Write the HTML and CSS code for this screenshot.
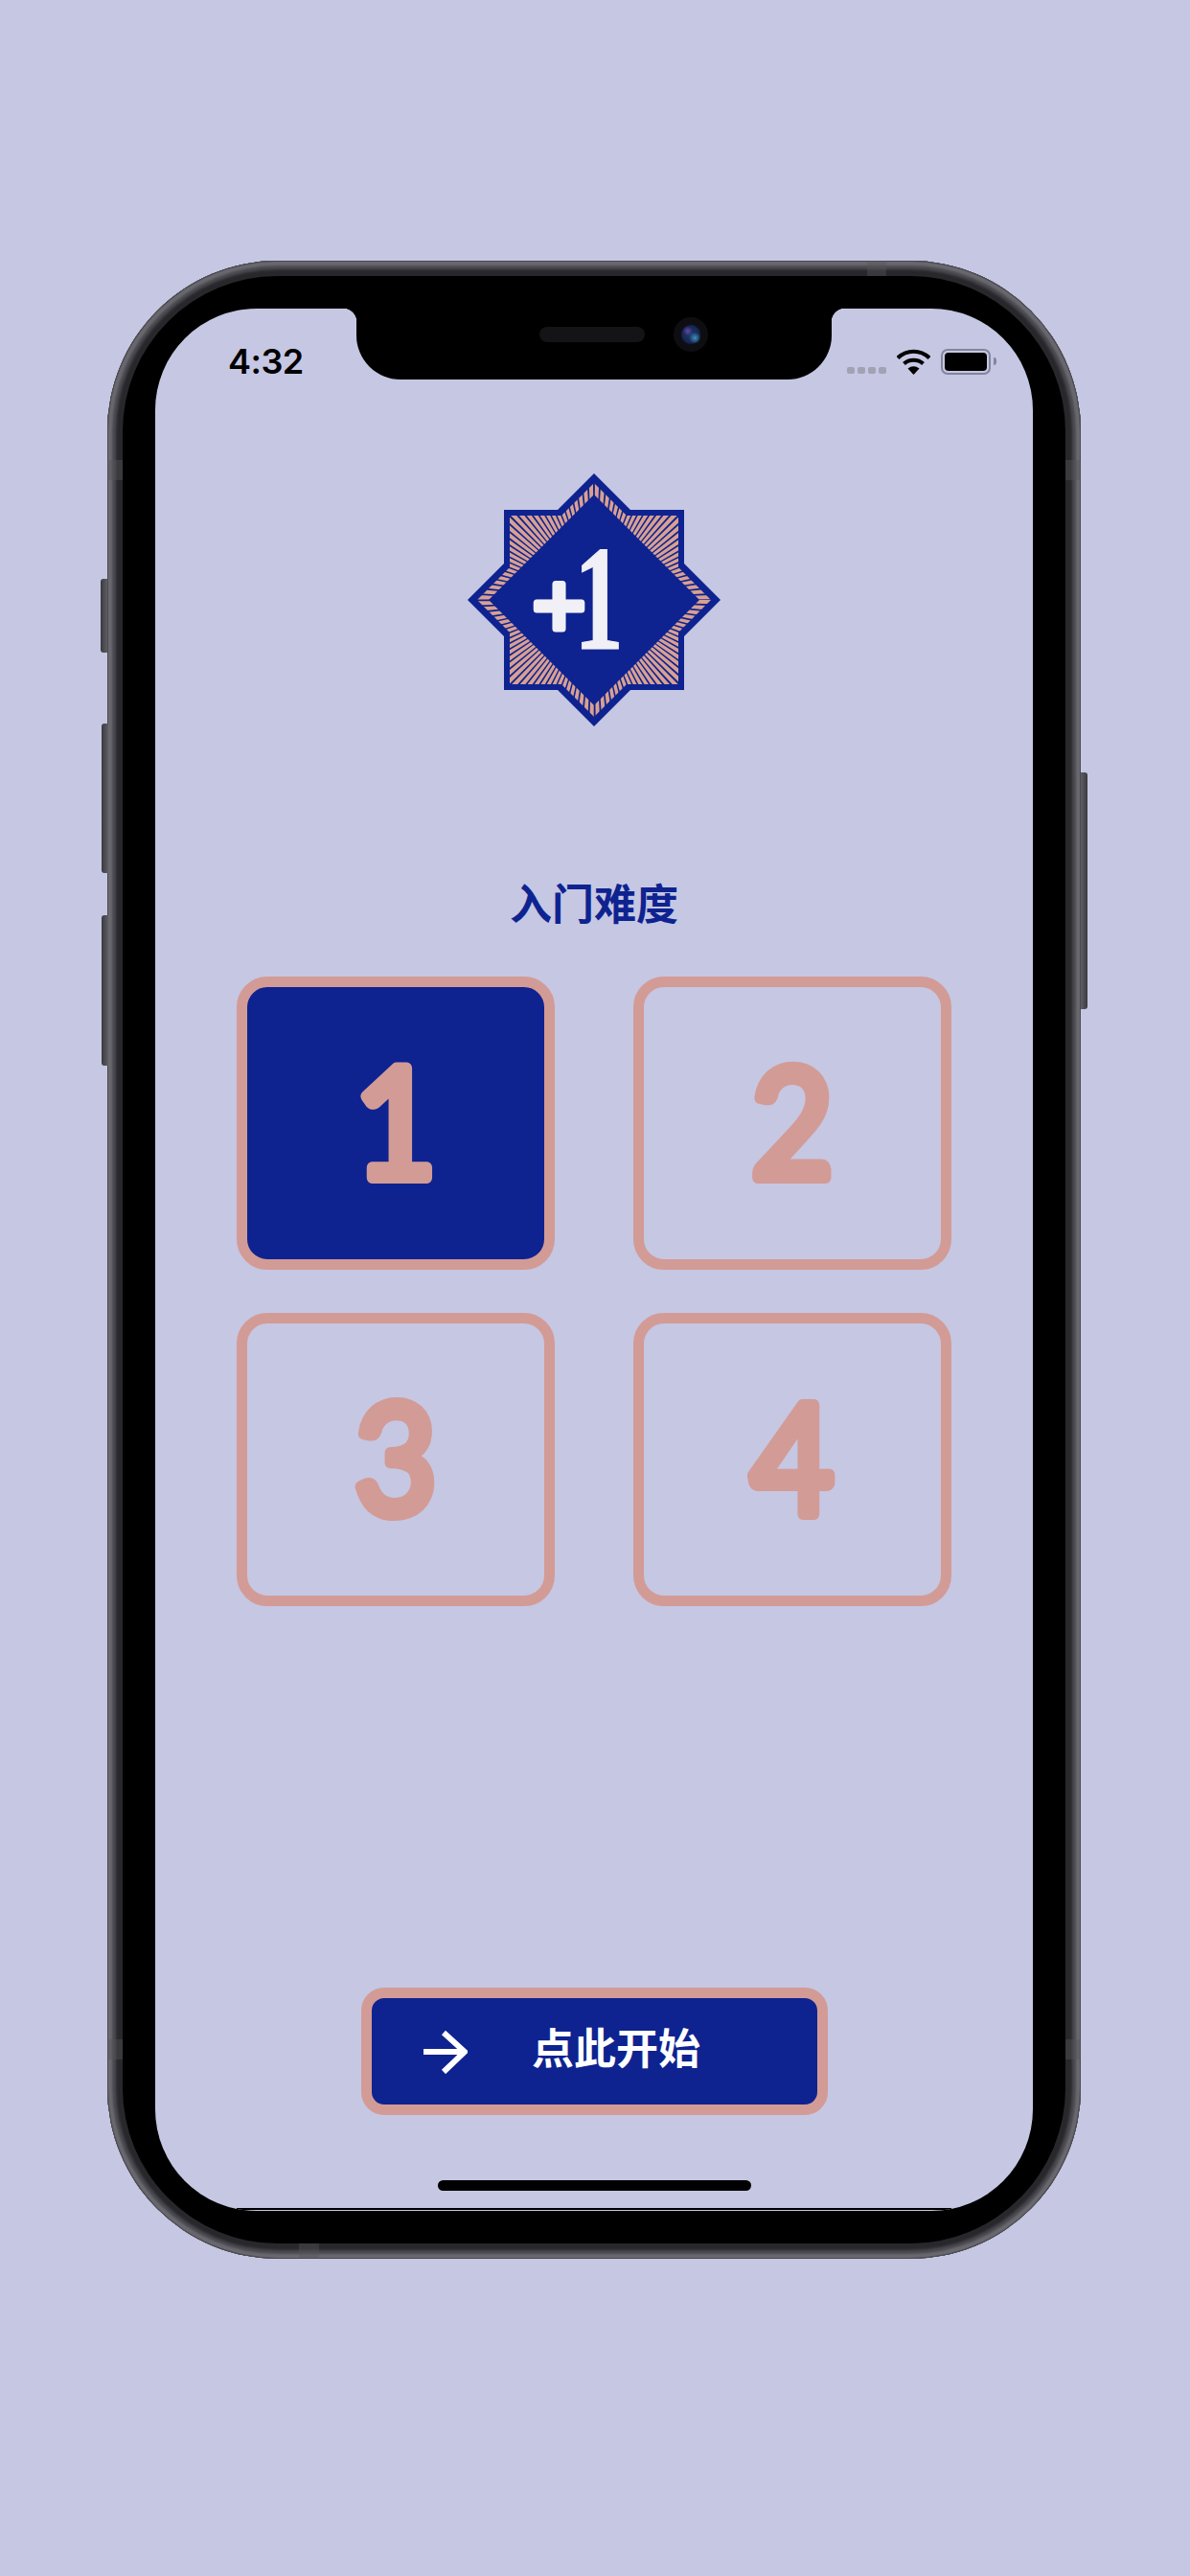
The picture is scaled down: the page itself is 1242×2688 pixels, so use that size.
FILE: index.html
```html
<!DOCTYPE html>
<html lang="zh">
<head>
    <meta charset="UTF-8">
    <meta name="viewport" content="width=device-width, initial-scale=1.0">
    <title>+1</title>
    <link rel="stylesheet" href="styles.css">
</head>
<body>
    <div class="phone">
        <span class="side_btn mute"></span>
        <span class="side_btn vol_up"></span>
        <span class="side_btn vol_down"></span>
        <span class="side_btn power"></span>
        <span class="band band_top"></span>
        <span class="band band_bottom"></span>
        <span class="band band_left1"></span>
        <span class="band band_left2"></span>
        <span class="band band_right1"></span>
        <span class="band band_right2"></span>

        <div class="screen">
            <div class="notch">
                <span class="speaker"></span>
                <span class="camera"></span>
            </div>

            <div class="status_bar">
                <span class="time">4:32</span>
                <div class="status_icons">
                    <div class="signal"><i></i><i></i><i></i><i></i></div>
                    <svg class="wifi" width="35" height="27" viewBox="0 0 35 27">
                        <path d="M1 9.5C10.500 .5 24.500 .5 34 9.500" fill="none" stroke="#000" stroke-width="4.200"/>
                        <path d="M7.500 15.500C13 10.500 22 10.500 27.500 15.500" fill="none" stroke="#000" stroke-width="4.200"/>
                        <path d="M11.500 20.500 Q17.500 16 23.500 20.500L17.500 27Z" fill="#000"/>
                    </svg>
                    <div class="battery"><span class="battery_fill"></span></div>
                    <span class="battery_cap"></span>
                </div>
            </div>

            <svg class="logo" width="264" height="264" viewBox="-132 -132 264 264">
                <defs>
                    <clipPath id="starClip">
                        <polygon points="0,-122 34,-88 88,-88 88,-34 122,0 88,34 88,88 34,88 0,122 -34,88 -88,88 -88,34 -122,0 -88,-34 -88,-88 -34,-88"/>
                    </clipPath>
                </defs>
                <polygon fill="#0e2390" points="0,-132 38,-94 94,-94 94,-38 132,0 94,38 94,94 38,94 0,132 -38,94 -94,94 -94,38 -132,0 -94,-38 -94,-94 -38,-94"/>
                <g clip-path="url(#starClip)">
                    <circle r="100" fill="none" stroke="#d8a093" stroke-width="90" stroke-dasharray="3.600 1.636"/>
                </g>
                <polygon fill="#0e2390" points="0,-110 110,0 0,110 -110,0"/>
                <text class="logo_plus" x="-65" y="40">+</text>
                <text class="logo_one" x="-32" y="51" transform="scale(.66 1)">1</text>
            </svg>

            <div class="title">入门难度</div>

            <div class="level_grid">
                <div class="level_card selected"><svg class="level_num" viewBox="-100 -100 200 200"><text y="57" transform="scale(.93 1)" text-anchor="middle">1</text></svg></div>
                <div class="level_card"><svg class="level_num" viewBox="-100 -100 200 200"><text y="57" transform="scale(.93 1)" text-anchor="middle">2</text></svg></div>
                <div class="level_card"><svg class="level_num" viewBox="-100 -100 200 200"><text y="57" transform="scale(.93 1)" text-anchor="middle">3</text></svg></div>
                <div class="level_card"><svg class="level_num" viewBox="-100 -100 200 200"><text y="57" transform="scale(.93 1)" text-anchor="middle">4</text></svg></div>
            </div>

            <div class="start_btn">
                <svg class="arrow" width="46" height="46" viewBox="0 0 46 46">
                    <path d="M0 23H42M21 3L43 23L21 44" fill="none" stroke="#fff" stroke-width="6"/>
                </svg>
                <span class="start_text">点此开始</span>
            </div>

            <div class="home_bar"></div>
            <div class="screen_edge"></div>
        </div>
    </div>
</body>
</html>
```

FILE: styles.css
```css
body {
    margin: 0;
    padding: 0;
    width: 1242px;
    height: 2688px;
    overflow: hidden;
    background-color: #c5c7e3;
    font-family: "Noto Sans CJK SC", "Noto Sans", sans-serif;
}

.phone {
    position: relative;
    box-sizing: border-box;
    width: 1016px;
    height: 2085px;
    margin: 272px 0 0 112px;
    padding: 50px;
    border-radius: 178px;
    background-color: #000;
    box-shadow: inset 0 0 0 1px #4a4a50, inset 0 0 2px 5px #68686e, inset 0 0 3px 9px #4c4c52, inset 0 0 0 16px #28282c;
}

.side_btn {
    position: absolute;
    width: 7px;
    border-radius: 3px 0 0 3px;
    background: linear-gradient(to right, #3a3a3f, #5e5e64);
}

.mute {
    left: -7px;
    top: 332px;
    height: 77px;
}

.vol_up {
    left: -6px;
    top: 483px;
    height: 156px;
}

.vol_down {
    left: -6px;
    top: 683px;
    height: 157px;
}

.power {
    right: -7px;
    top: 534px;
    height: 247px;
    border-radius: 0 3px 3px 0;
    background: linear-gradient(to left, #3a3a3f, #5e5e64);
}

.band {
    position: absolute;
    background-color: rgba(84, 84, 90, 0.4);
}

.band_top {
    top: 0;
    left: 793px;
    width: 20px;
    height: 16px;
}

.band_bottom {
    bottom: 0;
    left: 200px;
    width: 21px;
    height: 16px;
}

.band_left1, .band_left2, .band_right1, .band_right2 {
    width: 16px;
    height: 21px;
}

.band_left1 {
    left: 0;
    top: 208px;
}

.band_left2 {
    left: 0;
    top: 1856px;
}

.band_right1 {
    right: 0;
    top: 208px;
}

.band_right2 {
    right: 0;
    top: 1856px;
}

.screen {
    position: relative;
    display: flex;
    flex-direction: column;
    height: 100%;
    border-radius: 106px;
    background-color: #c5c7e3;
    overflow: hidden;
}

.notch {
    position: absolute;
    top: 0;
    left: 210px;
    width: 496px;
    height: 74px;
    display: flex;
    align-items: center;
    background-color: #000;
    border-radius: 0 0 46px 46px;
}

.notch::before, .notch::after {
    content: "";
    position: absolute;
    top: 0;
    width: 14px;
    height: 14px;
}

.notch::before {
    left: -14px;
    background: radial-gradient(circle at 0 100%, transparent 14px, #000 14.500px);
}

.notch::after {
    right: -14px;
    background: radial-gradient(circle at 100% 100%, transparent 14px, #000 14.500px);
}

.speaker {
    position: absolute;
    left: 191px;
    top: 19px;
    width: 110px;
    height: 16px;
    border-radius: 8px;
    background-color: #141416;
}

.camera {
    position: absolute;
    left: 331px;
    top: 9px;
    width: 36px;
    height: 36px;
    border-radius: 50%;
    background:
        radial-gradient(circle at 41% 40%, #6a44a8 0, rgba(106, 68, 168, 0) 5px),
        radial-gradient(circle at 62% 60%, #3f8fb8 0, rgba(63, 143, 184, 0) 6px),
        radial-gradient(circle at 50% 50%, #1f3a70 0, #16264e 9px, #0a0f20 10.500px, #0e0e12 11px);
}

.status_bar {
    display: flex;
    justify-content: space-between;
    align-items: center;
    height: 44px;
    margin-top: 33px;
    padding: 0 38px 0 76px;
}

.time {
    font-family: Inter, "Liberation Sans", sans-serif;
    font-size: 36px;
    font-weight: 600;
    letter-spacing: -0.5px;
    line-height: 44px;
    color: #000;
}

.status_icons {
    display: flex;
    align-items: flex-end;
    height: 28px;
}

.signal {
    display: flex;
    gap: 3px;
    margin: 0 11px 1px 0;
}

.signal i {
    width: 8px;
    height: 7px;
    border-radius: 2px;
    background-color: #a2a2b5;
}

.wifi {
    margin-right: 11px;
}

.battery {
    box-sizing: border-box;
    width: 52px;
    height: 27px;
    padding: 2px;
    border: 2px solid #85859a;
    border-radius: 7px;
}

.battery_fill {
    display: block;
    height: 100%;
    border-radius: 4px;
    background-color: #000;
}

.battery_cap {
    width: 3px;
    height: 8px;
    margin: 0 0 10px 3px;
    border-radius: 0 3px 3px 0;
    background-color: #85859a;
}

.logo {
    display: block;
    margin: 95px auto 0;
}

.logo_plus, .logo_one {
    font-family: "Liberation Serif", serif;
    font-weight: bold;
    fill: #f0f0f6;
    stroke: #f0f0f6;
    stroke-linejoin: round;
}

.logo_plus {
    font-size: 100px;
    letter-spacing: -20px;
    stroke-width: 7px;
}

.logo_one {
    font-size: 157px;
    stroke-width: 1px;
}

.title {
    margin-top: 153px;
    margin-bottom: 2px;
    height: 60px;
    font-size: 44px;
    font-weight: bold;
    line-height: 60px;
    text-align: center;
    color: #0e2390;
}

.level_grid {
    display: grid;
    grid-template-columns: 332px 332px;
    grid-auto-rows: 306px;
    column-gap: 82px;
    row-gap: 45px;
    margin-top: 46px;
    padding-left: 85px;
}

.level_card {
    box-sizing: border-box;
    display: flex;
    align-items: center;
    justify-content: center;
    border: 11px solid #d39b96;
    border-radius: 32px;
}

.level_num {
    width: 200px;
    height: 200px;
}

.level_num text {
    font-family: Lato, "Noto Sans", sans-serif;
    font-size: 160px;
    font-weight: 400;
    fill: #d39b96;
    stroke: #d39b96;
    stroke-width: 12px;
    stroke-linejoin: round;
}

.selected {
    background-color: #0e2390;
}

.start_btn {
    box-sizing: border-box;
    display: flex;
    align-items: center;
    width: 487px;
    height: 133px;
    margin: auto 0 0 215px;
    padding-left: 54px;
    border: 11px solid #d39b96;
    border-radius: 24px;
    background-color: #0e2390;
}

.start_text {
    margin: 0 0 12px 67px;
    font-size: 44px;
    font-weight: bold;
    color: #fff;
}

.home_bar {
    width: 327px;
    height: 11px;
    margin: 68px 0 21px 295px;
    border-radius: 6px;
    background-color: #000;
}

.screen_edge {
    position: absolute;
    left: 85px;
    right: 85px;
    bottom: 1px;
    height: 2px;
    background-color: #000;
}
```
